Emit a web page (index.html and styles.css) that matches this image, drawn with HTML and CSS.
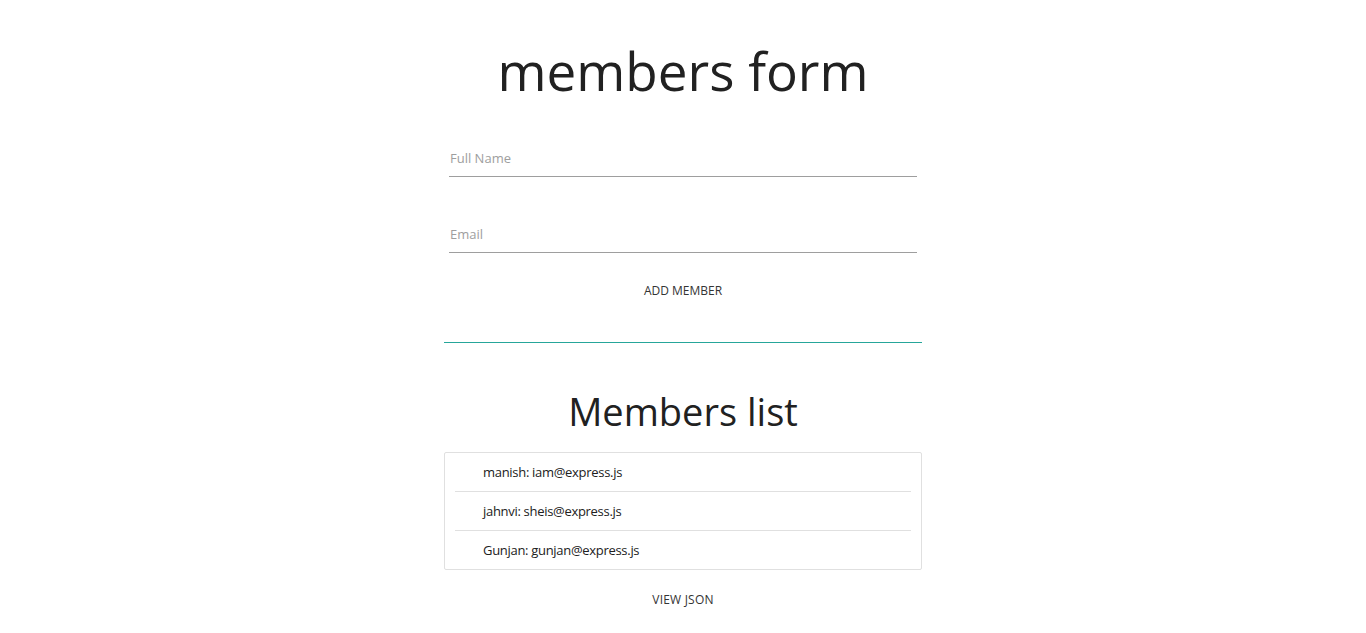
FILE: index.html
```html
<!DOCTYPE html>
<html lang="en">
<head>
<meta charset="utf-8">
<title>members form</title>
<link rel="stylesheet" href="styles.css">
</head>
<body>
<main class="container">
  <h1 class="title">members form</h1>
  <form class="form">
    <div class="field"><input type="text" placeholder="Full Name"></div>
    <div class="field field-second"><input type="email" placeholder="Email"></div>
    <div class="actions"><button type="button" class="btn-flat">ADD MEMBER</button></div>
  </form>
  <div class="divider"></div>
  <h2 class="subtitle">Members list</h2>
  <div class="card">
    <ul class="list">
      <li class="item">manish: iam@express.js</li>
      <li class="item">jahnvi: sheis@express.js</li>
      <li class="item">Gunjan: gunjan@express.js</li>
    </ul>
  </div>
  <div class="actions json"><a class="btn-flat">VIEW JSON</a></div>
</main>
</body>
</html>
```
FILE: styles.css
```css
html, body {
  margin: 0;
  padding: 0;
  background: #fff;
}
body {
  font-family: "Open Sans", "Noto Sans", sans-serif;
  color: #212121;
}
.container {
  width: 478px;
  margin: 0 auto;
}
.title {
  margin: 0;
  padding-top: 39px;
  font-size: 53px;
  font-weight: 400;
  line-height: 64px;
  text-align: center;
  color: #212121;
}
.form {
  padding: 0 5px;
}
.field {
  margin-top: 42px;
}
.field-second {
  margin-top: 44px;
}
.field input {
  display: block;
  box-sizing: border-box;
  width: 100%;
  height: 32px;
  padding: 0 0 5px 1px;
  border: none;
  border-bottom: 1px solid #9e9e9e;
  outline: none;
  font-family: inherit;
  font-size: 13px;
  color: #212121;
  background: transparent;
}
.field input::placeholder {
  color: #9e9e9e;
}
.actions {
  display: flex;
  justify-content: center;
  margin-top: 28px;
}
.btn-flat {
  border: none;
  background: none;
  padding: 0;
  font-family: inherit;
  font-size: 12px;
  line-height: 20px;
  color: #343434;
  cursor: pointer;
}
.json .btn-flat {
  letter-spacing: 0.2px;
}
.divider {
  margin-top: 41px;
  height: 1px;
  background: #26a69a;
}
.subtitle {
  margin: 0;
  padding-top: 40px;
  font-size: 38px;
  font-weight: 400;
  line-height: 56px;
  text-align: center;
  color: #212121;
}
.card {
  margin-top: 13px;
  border: 1px solid #e0e0e0;
  border-radius: 2px;
}
.list {
  list-style: none;
  margin: 0 10px;
  padding: 0;
}
.item {
  height: 38px;
  line-height: 38px;
  padding-left: 28px;
  font-size: 13px;
  letter-spacing: -0.3px;
  color: #212121;
  border-bottom: 1px solid #e0e0e0;
}
.item:last-child {
  border-bottom: none;
}
.json {
  margin-top: 20px;
}
```
